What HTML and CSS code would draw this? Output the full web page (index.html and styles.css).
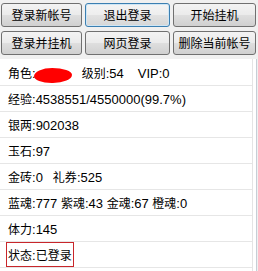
FILE: index.html
```html
<!DOCTYPE html>
<html lang="zh-CN">
<head>
  <meta charset="UTF-8" />
  <title>挂机助手</title>
  <link rel="stylesheet" href="styles.css">
</head>
<body>

  <!-- BOTONES -->
  <div class="toolbar">
    <button class="btn">登录新帐号</button>
    <button class="btn focus">退出登录</button>
    <button class="btn">开始挂机</button>
    <button class="btn">登录并挂机</button>
    <button class="btn">网页登录</button>
    <button class="btn">删除当前帐号</button>
  </div>

  <!-- INFO DEL PERSONAJE -->
  <div class="panel">
    <div class="list">
      <div class="row"><span class="k">角色</span>:<span class="blob"></span><span class="sp1"><span class="k">级别</span>:54</span><span class="sp2">VIP:0</span></div>
      <div class="row"><span class="k">经验</span>:4538551/4550000(99.7%)</div>
      <div class="row"><span class="k">银两</span>:902038</div>
      <div class="row"><span class="k">玉石</span>:97</div>
      <div class="row"><span class="k">金砖</span>:0<span class="sp3"><span class="k">礼券</span>:525</span></div>
      <div class="row"><span class="k">蓝魂</span>:777 <span class="k">紫魂</span>:43 <span class="k">金魂</span>:67 <span class="k">橙魂</span>:0</div>
      <div class="row"><span class="k">体力</span>:145</div>
      <div class="row"><span class="status"><span class="k">状态</span>:<span class="k">已登录</span></span></div>
    </div>
  </div>

</body>
</html>
```

FILE: styles.css
```css
/* Reset */
* {
  margin: 0; padding: 0; box-sizing: border-box;
}
body {
  width: 258px;
  height: 271px;
  overflow: hidden;
  background: #f0f0f0;
  font-family: "Liberation Sans", "Noto Sans CJK SC", sans-serif;
  font-size: 13px;
  color: #000;
}
/* BOTONES */
.toolbar {
  display: grid;
  grid-template-columns: 81px 85px 83px;
  column-gap: 3px;
  row-gap: 4px;
  padding: 3px 0 0 1px;
}
.btn {
  height: 24px;
  border: 1px solid #707070;
  border-radius: 3px;
  background: linear-gradient(#f3f3f3 0%, #ebebeb 48%, #dedede 52%, #d0d0d0 100%);
  font-family: "Noto Sans CJK SC", sans-serif;
  font-size: 12px;
  line-height: 20px;
  color: #000;
}
/* boton con foco: borde azul */
.btn.focus {
  border-color: #3c7fb1;
  box-shadow: inset 0 0 0 1px #cfe6f5;
  background: linear-gradient(#f4f4f4 0%, #eeeeee 48%, #e2e2e2 52%, #d6d6d6 100%);
}
/* PANEL */
.panel {
  margin-top: 4px;
  margin-right: 1px;
  height: 212px;
  background: #fff;
  border-right: 1px solid #c6ced6;
  padding-right: 3px;
}
.list {
  height: 100%;
  padding-top: 1px;
  border-right: 1px solid #e4e4e4;
}
.row {
  height: 26px;
  line-height: 25px;
  padding-left: 8px;
  border-bottom: 1px solid #e6e6e6;
  white-space: nowrap;
}
.k {
  font-family: "Noto Sans CJK SC", sans-serif;
  font-size: 12px;
}
/* nombre tapado */
.blob {
  display: inline-block;
  width: 38px;
  height: 15px;
  margin-left: -2px;
  vertical-align: -5px;
  background: #ff0000;
  border-radius: 48% 52% 50% 46% / 55% 45% 55% 45%;
}
.sp1 { margin-left: 10px; }
.sp2 { margin-left: 14px; }
.sp3 { margin-left: 10px; }
.status {
  display: inline-block;
  height: 25px;
  line-height: 23px;
  margin-left: -2px;
  padding: 0 1px;
  vertical-align: top;
  border: 1px solid #c8262b;
}
```
